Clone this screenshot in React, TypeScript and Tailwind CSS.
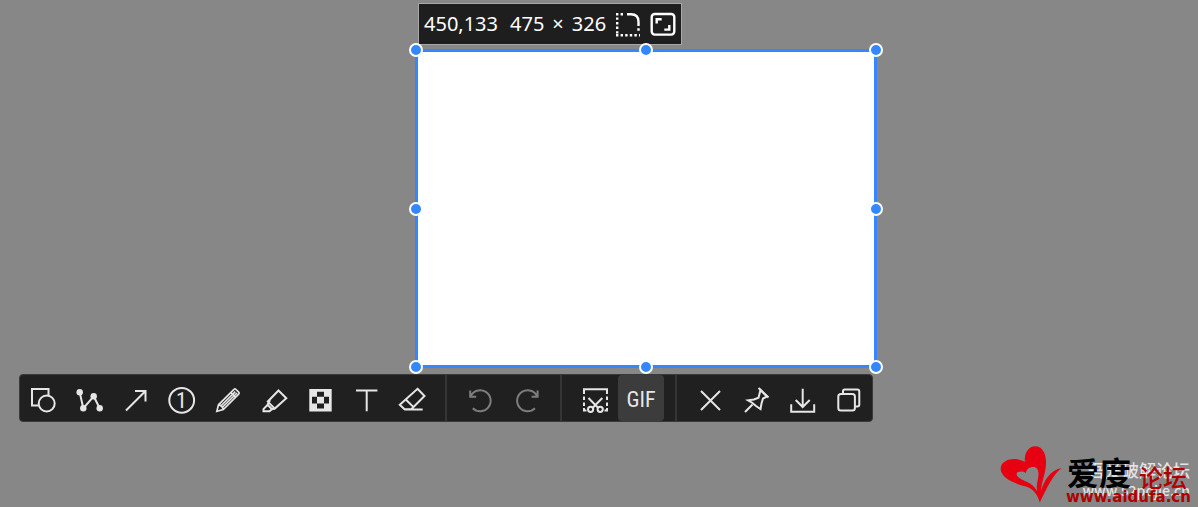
import type { ReactNode } from 'react'
import clsx from 'clsx'

type Tool = {
  label: string
  icon: ReactNode
  disabled?: boolean
  active?: boolean
}

const groups: Tool[][] = [
  [
    {
      label: 'Shapes',
      icon: (
        <>
          <path d="M28.5 20V14H12v16.5h6" />
          <circle cx="26.7" cy="28.5" r="8" />
        </>
      )
    },
    {
      label: 'Polyline',
      icon: (
        <>
          <path d="M13.7 17.3l3.6 16 10.4-12 6 12" />
          <g fill="currentColor" stroke="none">
            <circle cx="13.7" cy="17.3" r="3.2" />
            <circle cx="17.3" cy="33.3" r="3.2" />
            <circle cx="27.7" cy="21.3" r="3.2" />
            <circle cx="33.7" cy="33.3" r="3.2" />
          </g>
        </>
      )
    },
    {
      label: 'Arrow',
      icon: <path d="M14 35.5L33.5 16M23 16h10.5v10.5" />
    },
    {
      label: 'Number',
      icon: (
        <>
          <circle cx="23.7" cy="25.3" r="12.4" />
          <text
            x="23.5"
            y="33"
            textAnchor="middle"
            fill="currentColor"
            stroke="none"
            className="font-['Roboto_Condensed','Roboto',sans-serif] text-[22px]"
          >
            1
          </text>
        </>
      )
    },
    {
      label: 'Pencil',
      icon: (
        <path
          strokeWidth="1.7"
          d="M12.8 36.4l1.7-6.6L30 14.3q1-.8 2 .2l2.7 2.7q1 1 0 2L19.3 34.6zM14.7 29.8q3.6.6 4.6 4.6M17.3 30.5L31.3 16.7M18.7 32L33 18M26.8 17.5l4.8 4.8"
        />
      )
    },
    {
      label: 'Highlighter',
      icon: (
        <path d="M28.5 15.5l7.8 7.7L24.8 33.6l-7-7zM20 25l-2.5 4.8-4 4.4v2h6l2.5-2 3.5-1M17.5 29.8l4.3 4.2" />
      )
    },
    {
      label: 'Mosaic',
      icon: (
        <path
          fill="currentColor"
          fillRule="evenodd"
          stroke="none"
          d="M13.3 14h22.4v22.4H13.3zM21 16.7v5h7v-5zM16 21.7v6.8h5v-6.8zM28 21.7v6.8h5v-6.8zM21 28.5v5h7v-5z"
        />
      )
    },
    { label: 'Text', icon: <path d="M14 15.5h21.4M24.7 15.5v20.7" /> },
    {
      label: 'Eraser',
      icon: (
        <path d="M29.5 13.8l7 7.2L23.3 34.3h-6.8l-4.7-4.6zM18 24.7l7.3 7.2M16.5 34.6h18.2" />
      )
    }
  ],
  [
    {
      label: 'Undo',
      disabled: true,
      icon: <path d="M13.2 15.6v6.2h6M13.5 21.6a10.5 10.5 0 1 1 2.3 11.6" />
    },
    {
      label: 'Redo',
      disabled: true,
      icon: <path d="M34.6 15.6v6.2h-6M34.3 21.6a10.5 10.5 0 1 0 -2.3 11.6" />
    }
  ],
  [
    {
      label: 'Cut out',
      icon: (
        <>
          <path d="M12 19v-4.7h23V19" />
          <path d="M12 21.5v3.5M12 27.5V31M12 33v2.5h2.5M35 21.5v3.5M35 27.5V31M35 33v2.5h-2.5" />
          <path d="M16.5 23l9.8 10M30.3 23l-9.8 10" />
          <circle cx="18.6" cy="34.3" r="2.6" />
          <circle cx="28.2" cy="34.3" r="2.6" />
        </>
      )
    },
    {
      label: 'Record GIF',
      active: true,
      icon: null
    }
  ],
  [
    { label: 'Close', icon: <path d="M14 16l19 19M33 16L14 35" /> },
    {
      label: 'Pin',
      icon: (
        <>
          <path d="M27.5 15l6.5 6.5-4 2-1.5 5-1 5.5-4.5-3-3.5-3-4.5-2.7 6-.8 4.5-1.8z" />
          <path d="M25.5 13l10 9.5M19.5 29.5L12 37" />
        </>
      )
    },
    {
      label: 'Save',
      icon: <path d="M23.7 13.8v18M16.7 25l7 7 7-7M12.2 29.3v7.4h23v-7.4" />
    },
    {
      label: 'Copy',
      icon: (
        <>
          <rect x="13.3" y="19" width="16.6" height="16.6" rx="2.5" />
          <path d="M18 18.5v-2.3q0-1.7 1.7-1.7h12.6q2 0 2 2v13q0 2-2 2h-2" />
        </>
      )
    }
  ]
]

const handles = [
  'left-0 top-0',
  'left-1/2 top-0',
  'left-full top-0',
  'left-0 top-1/2',
  'left-full top-1/2',
  'left-0 top-full',
  'left-1/2 top-full',
  'left-full top-full'
]

function ToolButton({ tool }: { tool: Tool }) {
  return (
    <button
      type="button"
      aria-label={tool.label}
      disabled={tool.disabled}
      className={clsx(
        'flex size-[46px] items-center justify-center rounded',
        tool.disabled ? 'text-[#7d7d7d]' : 'text-[#e6e6e6]',
        tool.active && 'bg-[#3c3c3c]'
      )}
    >
      {tool.icon ? (
        <svg
          viewBox="0 0 46 46"
          className="size-full"
          fill="none"
          stroke="currentColor"
          strokeWidth="2"
        >
          {tool.icon}
        </svg>
      ) : (
        <span className="pt-1 font-['Roboto_Condensed','Roboto',sans-serif] text-[22px] leading-6">
          GIF
        </span>
      )}
    </button>
  )
}

function SizeInfo() {
  return (
    <div className="ml-[3px] flex h-[42px] w-fit items-center border border-[#a8a8a8] bg-[#1e1e1e] px-[5px] text-[20px] leading-6 text-white">
      <span>450,133</span>
      <span className="ml-3 flex gap-2">
        <span>475</span>
        <span>×</span>
        <span>326</span>
      </span>
      <button type="button" aria-label="Rounded corners" className="ml-2">
        <svg viewBox="0 0 26 26" className="size-[26px]" fill="none" stroke="currentColor" strokeWidth="2.4">
          <path d="M13 3.2h4q7.5 0 7.5 7.5V15" />
          <path strokeDasharray="2.4 2.2" d="M2 3.2h9M3.2 6.4v16M2 24.2h24M24.5 17.3v4.8" />
        </svg>
      </button>
      <button type="button" aria-label="Aspect ratio" className="ml-2.5">
        <svg viewBox="0 0 26 26" className="size-[26px]" fill="none" stroke="currentColor" strokeWidth="2.4">
          <rect x="1.7" y="3" width="22.6" height="20.6" rx="3" />
          <path d="M6.7 12.5V8.2h5M19.3 14v4.6h-5" />
        </svg>
      </button>
    </div>
  )
}

function Selection() {
  return (
    <div className="relative mt-1 h-[319px] border-[3px] border-[#3388ff] bg-white">
      <div className="absolute -inset-0.5">
        {handles.map(place => (
          <span
            key={place}
            className={clsx(
              'absolute size-3.5 -translate-x-1/2 -translate-y-1/2 rounded-full border-2 border-white bg-[#3388ff]',
              place
            )}
          />
        ))}
      </div>
    </div>
  )
}

function Toolbar() {
  return (
    <div
      role="toolbar"
      className="mt-1.5 ml-[19px] flex w-fit rounded border border-[#3a3a3a] bg-[#202020] pr-px"
    >
      {groups.map((tools, index) => (
        <div key={index} className="flex">
          {index > 0 && <div className="mr-2.5 ml-[11px] w-0.5 bg-[#353535]" />}
          {tools.map(tool => (
            <ToolButton key={tool.label} tool={tool} />
          ))}
        </div>
      ))}
    </div>
  )
}

function Watermark() {
  return (
    <footer className="mt-auto flex h-[62px] justify-end pr-2">
      <svg viewBox="30 15 190 180" className="h-[60px] w-[63px]">
        <path
          fill="#e60012"
          d="M105 66C102 40 116 17 138 18c25 2 34 32 30 62-3 28-13 48-14 72 8-28 26-60 61-68-28 24-44 62-65 104C143 164 130 146 108 140 78 132 34 116 32 88c-1-34 52-38 73-22z"
        />
        <path
          fill="#878787"
          d="M108 99c2-14 14-20 26-18 16 4 13 26 9 42-2 11-3 20-1 32-9-20-27-29-45-36-18-7-21-20-12-23 8-3 18-2 23 3z"
        />
      </svg>
      <div className="relative w-[127px] whitespace-nowrap">
        <div className="absolute top-[15px] right-0 text-right font-['Noto_Sans_CJK_SC',sans-serif] font-medium text-[#e4e4e4]">
          <p className="text-[17px] leading-5">吾爱破解论坛</p>
          <p className="text-[14px] leading-5">www.52pojie.cn</p>
        </div>
        <p className="absolute top-2 left-1 flex items-end gap-2 font-['Noto_Sans_CJK_SC',sans-serif] leading-9">
          <span className="text-[32px] font-bold text-black">爱度</span>
          <span className="text-[24px] leading-6 font-medium text-[#b00000]">
            论坛
          </span>
        </p>
        <p className="absolute top-[42px] left-[3px] font-['DejaVu_Sans',sans-serif] text-[15px] leading-5 font-bold text-[#b00000]">
          www.aidufa.cn
        </p>
      </div>
    </footer>
  )
}

export default function App() {
  return (
    <main className="flex min-h-screen flex-col bg-[#878787] pt-[3px] font-['Noto_Sans',sans-serif]">
      <section className="mr-[321px] ml-[415px]">
        <SizeInfo />
        <Selection />
      </section>
      <Toolbar />
      <Watermark />
    </main>
  )
}
